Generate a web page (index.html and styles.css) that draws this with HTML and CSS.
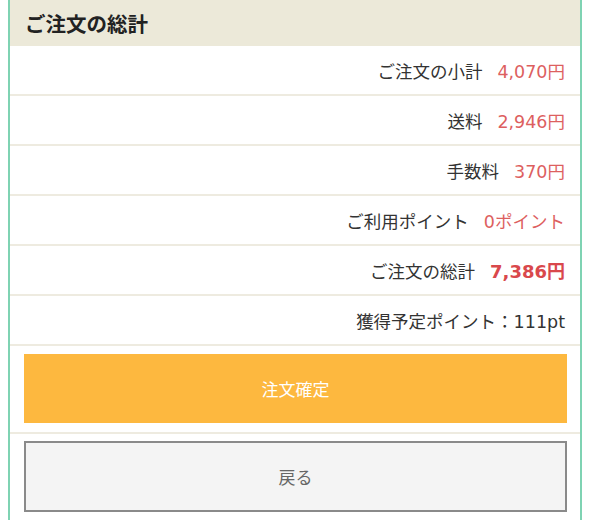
FILE: index.html
```html
<!DOCTYPE html>
<html lang="ja">
<head>
<meta charset="utf-8">
<link rel="stylesheet" href="styles.css">
</head>
<body>
<div class="box">
  <div class="head">ご注文の総計</div>
  <div class="row"><span class="label">ご注文の小計</span><span class="val">4,070円</span></div>
  <div class="row"><span class="label">送料</span><span class="val">2,946円</span></div>
  <div class="row"><span class="label">手数料</span><span class="val">370円</span></div>
  <div class="row"><span class="label">ご利用ポイント</span><span class="val">0ポイント</span></div>
  <div class="row"><span class="label">ご注文の総計</span><span class="val total">7,386円</span></div>
  <div class="row"><span class="label">獲得予定ポイント：111pt</span></div>
  <div class="btnrow"><div class="btn confirm">注文確定</div></div>
  <div class="btnrow last"><div class="btn back">戻る</div></div>
</div>
</body>
</html>
```
FILE: styles.css
```css
html, body { margin: 0; padding: 0; background: #fff; }
body { margin: 0 8px; font-family: "DejaVu Sans", "Noto Sans CJK JP", sans-serif; color: #333; }
.box { border-left: 2px solid #7fd3b3; border-right: 2px solid #7fd3b3; }
.head { background: #ece9d9; height: 46px; display: flex; align-items: center; padding-left: 15px; font-size: 20.5px; font-weight: bold; color: #222; }
.row { height: 48px; border-bottom: 2px solid #eeebe0; display: flex; align-items: center; justify-content: flex-end; padding-right: 15px; font-size: 17.5px; }
.label { color: #333; }
.val { color: #dd5f5f; margin-left: 15px; }
.val.total { font-weight: bold; color: #d9484c; font-size: 18px; }
.btnrow { padding: 8px 13px 9px 14px; border-bottom: 2px solid #eeebe0; }
.btnrow.last { border-bottom: none; padding-top: 7px; padding-bottom: 8px; }
.btn { display: flex; align-items: center; justify-content: center; font-size: 17px; box-sizing: border-box; }
.confirm { background: #fdb83f; color: #fff; height: 69px; }
.back { background: #f4f4f4; color: #666; border: 2px solid #8a8a8a; height: 71px; }
```
